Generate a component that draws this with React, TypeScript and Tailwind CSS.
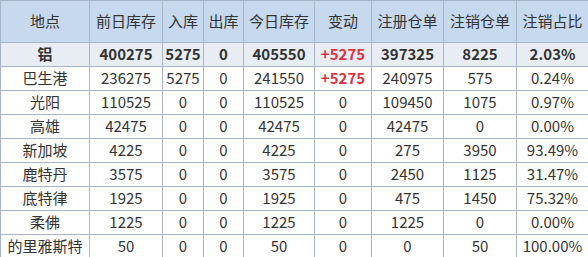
const headers = ["地点", "前日库存", "入库", "出库", "今日库存", "变动", "注册仓单", "注销仓单", "注销占比"];
const widths = ["w-[89px]", "w-[73px]", "w-[41px]", "w-[40px]", "w-[71px]", "w-[57px]", "w-[72px]", "w-[73px]", "w-[72px]"];

const total = ["铝", "400275", "5275", "0", "405550", "+5275", "397325", "8225", "2.03%"];

const rows = [
  ["巴生港", "236275", "5275", "0", "241550", "+5275", "240975", "575", "0.24%"],
  ["光阳", "110525", "0", "0", "110525", "0", "109450", "1075", "0.97%"],
  ["高雄", "42475", "0", "0", "42475", "0", "42475", "0", "0.00%"],
  ["新加坡", "4225", "0", "0", "4225", "0", "275", "3950", "93.49%"],
  ["鹿特丹", "3575", "0", "0", "3575", "0", "2450", "1125", "31.47%"],
  ["底特律", "1925", "0", "0", "1925", "0", "475", "1450", "75.32%"],
  ["柔佛", "1225", "0", "0", "1225", "0", "1225", "0", "0.00%"],
  ["的里雅斯特", "50", "0", "0", "50", "0", "0", "50", "100.00%"],
];

const cell = "border border-[#a6b6c8] text-center p-0 whitespace-nowrap";

export default function App() {
  return (
    <div className="w-[588px] h-[257px] overflow-hidden bg-white" style={{ fontFamily: '"Noto Sans CJK SC", "Liberation Sans", sans-serif' }}>
      <table className="table-fixed border-collapse w-[588px] text-[15px] text-[#333333]">
        <colgroup>
          {widths.map((w, i) => (
            <col key={i} className={w} />
          ))}
        </colgroup>
        <thead>
          <tr className="h-[42px] bg-[#c6d9ef]">
            {headers.map((h) => (
              <th key={h} className={`${cell} font-normal`}>{h}</th>
            ))}
          </tr>
        </thead>
        <tbody>
          <tr className="h-[23px] bg-[#e8edf3] font-bold">
            {total.map((v, i) => (
              <td key={i} className={`${cell} ${i === 5 ? "text-[#d9343f]" : ""}`}>{v}</td>
            ))}
          </tr>
          {rows.map((r) => (
            <tr key={r[0]} className="h-[24px]">
              {r.map((v, i) => (
                <td key={i} className={`${cell} ${i === 5 && v.startsWith("+") ? "text-[#d9343f] font-bold" : ""}`}>{v}</td>
              ))}
            </tr>
          ))}
        </tbody>
      </table>
    </div>
  );
}
